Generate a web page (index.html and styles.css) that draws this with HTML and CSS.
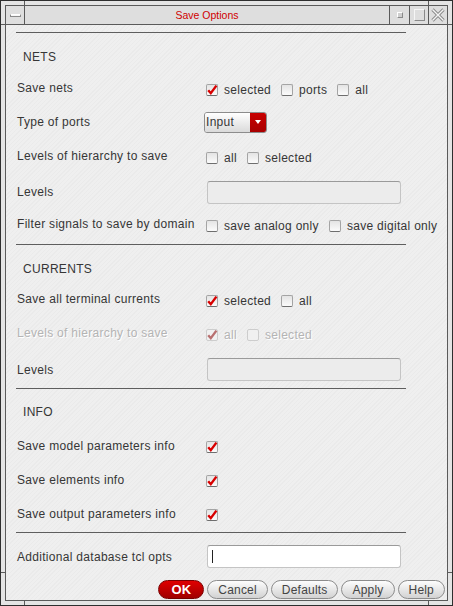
FILE: index.html
```html
<!DOCTYPE html>
<html>
<head>
    <title>Save Options</title>
    <link rel="stylesheet" href="styles.css">
</head>
<body>

<div class="window">
    <span class="tick tick-v" style="left: 23px; top: 0;"></span>
    <span class="tick tick-v" style="left: 427px; top: 0;"></span>
    <span class="tick tick-v" style="left: 23px; bottom: 0;"></span>
    <span class="tick tick-v" style="left: 427px; bottom: 0;"></span>
    <span class="tick tick-h" style="top: 23px; left: 0;"></span>
    <span class="tick tick-h" style="top: 23px; right: 0;"></span>
    <span class="tick tick-h" style="top: 571px; left: 0;"></span>
    <span class="tick tick-h" style="top: 571px; right: 0;"></span>

    <div class="frame">
        <div class="titlebar">
            <div class="tb-btn tb-menu"><span class="menu-bar"></span></div>
            <div class="tb-title">Save Options</div>
            <div class="tb-btn tb-min"><span class="min-dot"></span></div>
            <div class="tb-btn tb-max"><span class="max-box"></span></div>
            <div class="tb-btn tb-close">
                <svg width="14" height="14" viewBox="0 0 14 14">
                    <path d="M1.5 1.5 L12.5 12.5 M12.5 1.5 L1.5 12.5" stroke="#8a8a8a" stroke-width="3.2" fill="none"/>
                    <path d="M1.5 1.5 L12.5 12.5 M12.5 1.5 L1.5 12.5" stroke="#f4f4f4" stroke-width="1.4" fill="none"/>
                </svg>
            </div>
        </div>

        <div class="content">
            <div class="sep first"></div>
            <div class="heading">NETS</div>

            <div class="row h34">
                <span class="label">Save nets</span>
                <div class="controls">
                    <span class="opt"><span class="cb on"><svg class="tick-mark" width="12" height="12" viewBox="0 0 12 12"><path d="M2.2 6.2 L4.8 9.2 L10.4 1.6"/></svg></span>selected</span>
                    <span class="opt"><span class="cb"></span>ports</span>
                    <span class="opt"><span class="cb"></span>all</span>
                </div>
            </div>

            <div class="row h34">
                <span class="label">Type of ports</span>
                <div class="controls flat">
                    <div class="combo">
                        <span class="combo-text">Input</span>
                        <span class="combo-arrow"></span>
                    </div>
                </div>
            </div>

            <div class="row h34">
                <span class="label">Levels of hierarchy to save</span>
                <div class="controls">
                    <span class="opt"><span class="cb"></span>all</span>
                    <span class="opt"><span class="cb"></span>selected</span>
                </div>
            </div>

            <div class="row h38">
                <span class="label">Levels</span>
                <div class="controls flat"><div class="field"></div></div>
            </div>

            <div class="row h25">
                <span class="label">Filter signals to save by domain</span>
                <div class="controls">
                    <span class="opt"><span class="cb"></span>save analog only</span>
                    <span class="opt"><span class="cb"></span>save digital only</span>
                </div>
            </div>

            <div class="sep mid"></div>
            <div class="heading">CURRENTS</div>

            <div class="row h32">
                <span class="label">Save all terminal currents</span>
                <div class="controls">
                    <span class="opt"><span class="cb on"><svg class="tick-mark" width="12" height="12" viewBox="0 0 12 12"><path d="M2.2 6.2 L4.8 9.2 L10.4 1.6"/></svg></span>selected</span>
                    <span class="opt"><span class="cb"></span>all</span>
                </div>
            </div>

            <div class="row h36 disabled">
                <span class="label">Levels of hierarchy to save</span>
                <div class="controls">
                    <span class="opt"><span class="cb on"><svg class="tick-mark" width="12" height="12" viewBox="0 0 12 12"><path d="M2.2 6.2 L4.8 9.2 L10.4 1.6"/></svg></span>all</span>
                    <span class="opt"><span class="cb"></span>selected</span>
                </div>
            </div>

            <div class="row h37">
                <span class="label">Levels</span>
                <div class="controls flat"><div class="field"></div></div>
            </div>

            <div class="sep"></div>
            <div class="heading info">INFO</div>

            <div class="row h34">
                <span class="label">Save model parameters info</span>
                <div class="controls low">
                    <span class="cb on"><svg class="tick-mark" width="12" height="12" viewBox="0 0 12 12"><path d="M2.2 6.2 L4.8 9.2 L10.4 1.6"/></svg></span>
                </div>
            </div>

            <div class="row h34">
                <span class="label">Save elements info</span>
                <div class="controls low">
                    <span class="cb on"><svg class="tick-mark" width="12" height="12" viewBox="0 0 12 12"><path d="M2.2 6.2 L4.8 9.2 L10.4 1.6"/></svg></span>
                </div>
            </div>

            <div class="row h34">
                <span class="label">Save output parameters info</span>
                <div class="controls low">
                    <span class="cb on"><svg class="tick-mark" width="12" height="12" viewBox="0 0 12 12"><path d="M2.2 6.2 L4.8 9.2 L10.4 1.6"/></svg></span>
                </div>
            </div>

            <div class="sep last"></div>

            <div class="row h47">
                <span class="label">Additional database tcl opts</span>
                <div class="controls flat"><div class="field white"><span class="caret"></span></div></div>
            </div>

            <div class="buttons">
                <button class="ok">OK</button>
                <button>Cancel</button>
                <button>Defaults</button>
                <button>Apply</button>
                <button>Help</button>
            </div>
        </div>
    </div>
</div>

</body>
</html>
```

FILE: styles.css
```css
body {
    margin: 0;
    width: 453px;
    height: 606px;
    overflow: hidden;
    font-family: "Liberation Sans", Arial, sans-serif;
    font-size: 12px;
    letter-spacing: 0.3px;
    color: #363636;
}
.window {
    position: relative;
    width: 453px;
    height: 606px;
    box-sizing: border-box;
    border: 1px solid #2e2e2e;
    padding: 4px;
    background-color: #e4e4e4;
}
.tick {
    position: absolute;
    background-color: #5a5a5a;
}
.tick-v {
    width: 1px;
    height: 5px;
}
.tick-h {
    width: 5px;
    height: 1px;
}
.frame {
    height: 100%;
    box-sizing: border-box;
    border: 1px solid #5a5a5a;
    display: flex;
    flex-direction: column;
}

/* title bar */
.titlebar {
    display: flex;
    height: 18px;
    border-bottom: 1px solid #5a5a5a;
    background-color: #dedede;
}
.tb-btn {
    display: flex;
    align-items: center;
    justify-content: center;
    width: 18px;
    flex: none;
}
.tb-menu {
    border-right: 1px solid #5a5a5a;
}
.tb-min {
    width: 19px;
    border-left: 1px solid #5a5a5a;
}
.tb-max, .tb-close {
    border-left: 1px solid #5a5a5a;
}
.tb-title {
    flex: 1;
    text-align: center;
    color: #d00000;
    font-size: 10.5px;
    letter-spacing: 0;
    line-height: 18px;
}
.menu-bar {
    width: 11px;
    height: 3px;
    box-sizing: border-box;
    border: 1px solid #8a8a8a;
    border-top-color: #fff;
    background-color: #f6f6f6;
}
.min-dot {
    width: 4px;
    height: 4px;
    border: 1px solid #8a8a8a;
    border-top-color: #fff;
    border-left-color: #fff;
    background-color: #cfcfcf;
}
.max-box {
    width: 9px;
    height: 10px;
    border: 1px solid #f6f6f6;
    border-right-color: #8a8a8a;
    border-bottom-color: #8a8a8a;
}

/* content */
.content {
    flex: 1;
    display: flex;
    flex-direction: column;
    background-color: #efefef;
    background-image: repeating-linear-gradient(135deg, rgba(0, 0, 0, 0.018) 0 1px, transparent 1px 3px);
}
.sep {
    flex: none;
    height: 1px;
    width: 390px;
    margin-left: 10px;
    background-color: #5e5e5e;
}
.sep.first {
    margin-top: 7px;
}
.sep.mid {
    margin-top: 8px;
}
.sep.last {
    margin-top: 1px;
}
.heading {
    flex: none;
    padding: 17px 0 0 17px;
    height: 21px;
    line-height: 14px;
}
.heading.info {
    padding-top: 16px;
    height: 24px;
}
.row {
    flex: none;
    display: grid;
    grid-template-columns: 189px 1fr;
    align-items: center;
    padding-left: 11px;
}
.h25 { height: 25px; }
.h32 { height: 32px; }
.h34 { height: 34px; }
.h36 { height: 36px; }
.h37 { height: 37px; }
.h38 { height: 38px; }
.h47 { height: 47px; }

.label {
    white-space: nowrap;
}
.controls {
    display: flex;
    align-items: center;
    gap: 10px;
    padding-top: 4px;
    white-space: nowrap;
}
.controls.flat {
    padding-top: 0;
}
.controls.low {
    padding-top: 2px;
}
.opt {
    display: flex;
    align-items: center;
    gap: 6px;
}

/* checkbox */
.cb {
    position: relative;
    flex: none;
    width: 12px;
    height: 12px;
    box-sizing: border-box;
    border: 1px solid #a4a4a4;
    border-bottom-color: #6e6e6e;
    border-radius: 2px;
    background: linear-gradient(#e4e4e4, #fbfbfb);
}
.tick-mark {
    position: absolute;
    left: -1px;
    top: -1px;
    overflow: visible;
}
.tick-mark path {
    fill: none;
    stroke: #d80000;
    stroke-width: 2.4;
}
.disabled {
    color: #b4b4b4;
    text-shadow: 1px 1px 0 #fff;
}
.disabled .cb {
    border-color: #cdcdcd;
    background: #f0f0f0;
}
.disabled .tick-mark path {
    stroke: #b87070;
}

/* combo box */
.combo {
    display: flex;
    width: 63px;
    height: 21px;
    margin-left: -2px;
    box-sizing: border-box;
    border: 1px solid #8c8c8c;
    border-radius: 3px;
    overflow: hidden;
}
.combo-text {
    flex: 1;
    padding-left: 1px;
    line-height: 19px;
    background: linear-gradient(#ffffff, #dadada);
}
.combo-arrow {
    width: 16px;
    display: flex;
    align-items: center;
    justify-content: center;
    background: linear-gradient(#c80000, #a80000);
}
.combo-arrow::after {
    content: "";
    border-left: 3px solid transparent;
    border-right: 3px solid transparent;
    border-top: 4px solid #fff;
}

/* text fields */
.field {
    width: 194px;
    height: 23px;
    margin-left: 1px;
    box-sizing: border-box;
    border: 1px solid #c4c4c4;
    border-top-color: #9a9a9a;
    border-radius: 3px;
    background-color: #ececec;
}
.field.white {
    background-color: #fff;
    display: flex;
    align-items: center;
    padding-left: 4px;
}
.caret {
    width: 1px;
    height: 13px;
    background-color: #222;
}

/* bottom buttons */
.buttons {
    flex: none;
    display: flex;
    justify-content: flex-end;
    gap: 3px;
    padding-right: 2px;
}
.buttons button {
    height: 19px;
    padding: 0 10px;
    box-sizing: border-box;
    font-family: "Liberation Sans", Arial, sans-serif;
    font-size: 12px;
    letter-spacing: 0.2px;
    color: #444;
    border: 1px solid #8c8c8c;
    border-radius: 10px;
    background: linear-gradient(#fdfdfd, #d2d2d2);
}
.buttons .ok {
    padding: 0 12px;
    color: #fff;
    font-weight: bold;
    font-size: 13px;
    border-color: #7a0000;
    background: linear-gradient(#e00000, #a00000);
}
```
